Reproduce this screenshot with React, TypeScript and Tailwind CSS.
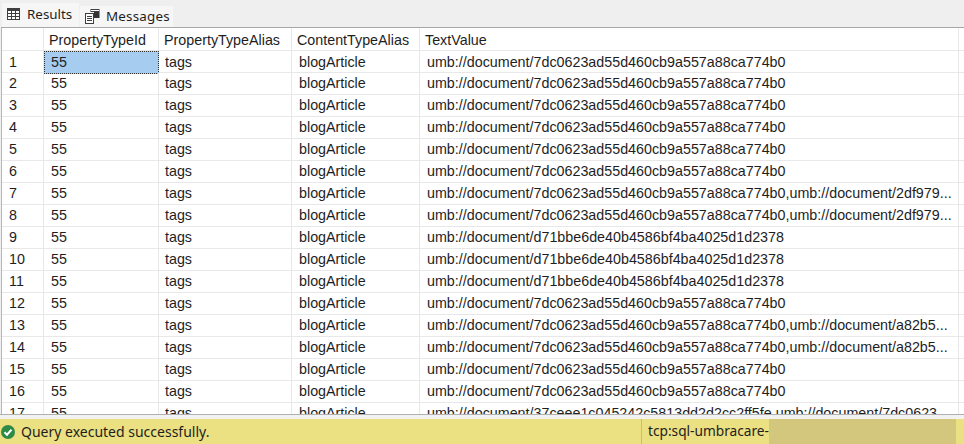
const A = "umb://document/7dc0623ad55d460cb9a557a88ca774b0";
const B = "umb://document/7dc0623ad55d460cb9a557a88ca774b0,umb://document/2df979...";
const C = "umb://document/d71bbe6de40b4586bf4ba4025d1d2378";
const D = "umb://document/7dc0623ad55d460cb9a557a88ca774b0,umb://document/a82b5...";
const E = "umb://document/37ceee1c045242c5813dd2d2cc2ff5fe,umb://document/7dc0623...";
const values = [A, A, A, A, A, A, B, B, C, C, C, A, D, D, A, A, E];

const cols = "grid grid-cols-[42px_115px_133px_128px_539px]";

function GridIcon() {
  return (
    <svg width="13" height="12" viewBox="0 0 13 12" className="shrink-0">
      <rect x="0.5" y="0.5" width="12" height="11" fill="#fff" stroke="#3f3f3f" />
      <rect x="0.5" y="0.5" width="12" height="2.5" fill="#3f3f3f" />
      <path d="M4.5 3V11M8.5 3V11M1 5.5H12M1 8.5H12" stroke="#3f3f3f" strokeWidth="1" />
    </svg>
  );
}

function MessagesIcon() {
  return (
    <svg width="15" height="15" viewBox="0 0 15 15" className="shrink-0">
      <rect x="0.5" y="4.5" width="8" height="10" fill="#fff" stroke="#3f3f3f" />
      <path d="M2 7.5H7M2 9.5H7M2 11.5H7" stroke="#3f3f3f" />
      <rect x="6" y="0.5" width="8" height="2" fill="#fff" stroke="#3f3f3f" />
      <rect x="9" y="3" width="5.5" height="6" fill="#333" />
    </svg>
  );
}

function CheckIcon() {
  return (
    <svg width="14" height="14" viewBox="0 0 14 14" className="shrink-0">
      <circle cx="7" cy="7" r="7" fill="#2e8b47" />
      <path d="M3.5 7.2L6 9.7L10.5 4.6" fill="none" stroke="#fff" strokeWidth="2" />
    </svg>
  );
}

export default function App() {
  return (
    <div className="flex h-[444px] w-[964px] flex-col overflow-hidden bg-[#f0f0f0] font-['Liberation_Sans',sans-serif] text-[14.3px] text-[#1e1e1e]">
      <div className="flex h-[27px] shrink-0 items-end bg-[#efefef] pl-[2px] font-['Noto_Sans',sans-serif] text-[13.4px]">
        <div className="flex h-[24px] w-[77px] items-center gap-[7px] bg-[#f6f6f6] pb-[2px] pl-[5px]">
          <GridIcon />
          <span>Results</span>
        </div>
        <div className="ml-[1px] flex h-[21px] w-[93px] items-center gap-[6px] bg-[#f6f6f6] pl-[5px] tracking-[0.2px]">
          <MessagesIcon />
          <span>Messages</span>
        </div>
      </div>

      <div className="ml-[1px] h-[387px] shrink-0 overflow-hidden border-t border-l border-t-[#a8a8a8] border-l-[#b5b5b5] bg-white">
        <div className={`${cols} h-[23px] border-b border-[#e8e8e8]`}>
          {["", "PropertyTypeId", "PropertyTypeAlias", "ContentTypeAlias", "TextValue"].map((h, i) => (
            <div key={i} className="flex items-center overflow-hidden border-r border-[#e8e8e8] pt-[3px] pl-[5px] whitespace-nowrap">
              {h}
            </div>
          ))}
        </div>
        {values.map((v, i) => (
          <div key={i} className={`${cols} h-[22px] shrink-0 border-b border-[#e8e8e8]`}>
            <div className="flex items-center border-r border-[#e8e8e8] pl-[7px]">{i + 1}</div>
            <div
              className={
                i === 0
                  ? "flex items-center border border-dotted border-[#333] bg-[#a6cdf0] pl-[6px]"
                  : "flex items-center border-r border-[#e8e8e8] pl-[7px]"
              }
            >
              55
            </div>
            <div className="flex items-center border-r border-[#e8e8e8] pl-[6px]">tags</div>
            <div className="flex items-center border-r border-[#e8e8e8] pl-[7px]">blogArticle</div>
            <div className="flex items-center overflow-hidden border-r border-[#e8e8e8] pl-[7px] whitespace-nowrap">{v}</div>
          </div>
        ))}
      </div>

      <div className="h-[5px] shrink-0 border-t border-[#b0b0b0] bg-[#f2f2f2]" />

      <div className="flex h-[25px] shrink-0 items-center bg-[#ebe082] font-['Noto_Sans',sans-serif] text-[14px]">
        <div className="flex w-[641px] items-center gap-[6px] pl-[1px]">
          <CheckIcon />
          <span>Query executed successfully.</span>
        </div>
        <div className="flex h-full items-center border-l border-[#c9bf6e] pl-[6px] text-[13.7px]">
          <span>tcp:sql-umbracare-</span>
          <div className="h-full w-[187px] bg-[#d3c77d]" />
        </div>
      </div>
    </div>
  );
}
